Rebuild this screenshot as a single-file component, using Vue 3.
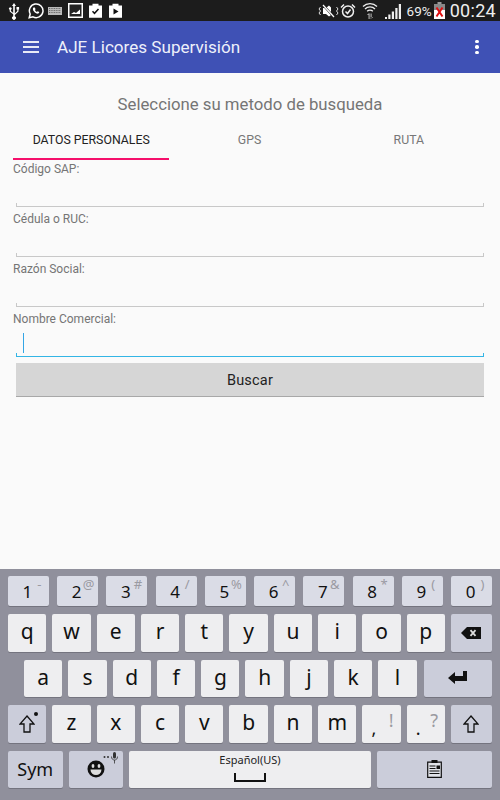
<script setup>
const fields = [
  { label: 'Código SAP:' },
  { label: 'Cédula o RUC:' },
  { label: 'Razón Social:' },
  { label: 'Nombre Comercial:', active: true },
]
const numbers = [['1', '-'], ['2', '@'], ['3', '#'], ['4', '/'], ['5', '%'], ['6', '^'], ['7', '&'], ['8', '*'], ['9', '('], ['0', ')']]
const row2 = ['q', 'w', 'e', 'r', 't', 'y', 'u', 'i', 'o', 'p']
const row3 = ['a', 's', 'd', 'f', 'g', 'h', 'j', 'k', 'l']
const row4 = ['z', 'x', 'c', 'v', 'b', 'n', 'm']
</script>

<template>
  <div class="screen">
    <div class="status">
      <div class="status-left">
        <svg width="12" height="18" viewBox="0 0 12 18"><path d="M6 1 8 4H6.800v7.400L9.300 9V7.600H8.500V5h2.600v2.600h-.6v1.900L6.800 13v1.200a1.900 1.900 0 1 1-1.600 0v-2L1.700 9.500V7.800a1.300 1.300 0 1 1 1.200 0V9l2.300 2V4H4Z" fill="#fff"/></svg>
        <svg class="wa" width="16" height="16" viewBox="0 0 16 16"><path d="M1.200 14.800 2.200 11A6.800 6.800 0 1 1 5 13.800Z" fill="none" stroke="#fff" stroke-width="1.500"/><path d="M5.500 4.600c-1 1-.8 2.500.5 4 1.400 1.600 3 2.500 4.200 2 .8-.3 1.100-1 1-1.500L9.700 8.200l-.8.800C8 8.600 7.400 8 6.900 7l.7-.8-.8-1.700Z" fill="#fff"/></svg>
        <svg class="kb" width="14" height="8" viewBox="0 0 14 8"><path d="M0 0h14v8H0Z" fill="#bbb"/><path d="M1 1.500h12M1 3.500h12M1 5.500h12" stroke="#333" stroke-width=".6" stroke-dasharray="1 .7"/></svg>
        <svg class="img" width="15" height="15" viewBox="0 0 15 15"><path d="M0 0h15v15H0Z" fill="#fff"/><path d="M1.500 1.500h12v12h-12Z" fill="#222"/><path d="M3 11 6 9l2 1 4-3.500V11Z" fill="#fff"/></svg>
        <svg width="15" height="15" viewBox="0 0 15 15"><path d="M1 2.500h3.500V.8h6v1.700H14v12.300H1Z" fill="#fff"/><path d="M4.500 8.300 6.500 10.300 10.500 6" fill="none" stroke="#111" stroke-width="1.500"/></svg>
        <svg width="15" height="15" viewBox="0 0 15 15"><path d="M1 2.500h3.500V.8h6v1.700H14v12.300H1Z" fill="#fff"/><path d="M5.500 5.500 10.500 8.500 5.500 11.500Z" fill="#111"/></svg>
      </div>
      <div class="status-right">
        <svg width="21" height="14" viewBox="0 0 21 14"><path d="M5 4h3l3-2.500 2 2V11L11 12.500 8 10H5Z" fill="#fff"/><path d="M5 1 16 13" stroke="#222" stroke-width="2.200"/><path d="M5 1 16 13" stroke="#fff" stroke-width="1.200"/><path d="M2.500 3 1 5l1.500 2L1 9l1.500 2M18.500 3 20 5l-1.500 2L20 9l-1.500 2" fill="none" stroke="#ddd"/></svg>
        <svg class="alarm" width="16" height="16" viewBox="0 0 16 16"><circle cx="8" cy="8.500" r="5.500" fill="none" stroke="#eee" stroke-width="1.500"/><path d="M5.500 8.500 7.500 10.500 10.500 6.500M1 4.500 4 1.500M15 4.500 12 1.500" fill="none" stroke="#eee" stroke-width="1.500"/></svg>
        <svg class="wifi" width="16" height="17" viewBox="0 0 16 17"><path d="M1 4.500a10 10 0 0 1 14 0M3 7a7 7 0 0 1 10 0M5.200 9.300a3.800 3.800 0 0 1 5.600 0" fill="none" stroke="#eee" stroke-width="1.300"/><path d="M6.500 11.500h1.200V17H6.500ZM4.800 13l2.300-2 .6 2ZM8.500 11.500h1.200V17H8.500ZM8 15l1.100 2 2.100-2Z" fill="#aaa"/></svg>
        <svg class="signal" width="16" height="16" viewBox="0 0 16 16"><path d="M0 14h2v2H0ZM3.300 11.500h2.200V16H3.300ZM6.800 8.500H9V16H6.800ZM10.300 5h2.200v11h-2.200ZM13.800 1H16v15h-2.200Z" fill="#eee"/></svg>
        <span class="pct">69%</span>
        <svg class="battery" width="11" height="17" viewBox="0 0 11 17"><path d="M3.500 0h4v2h-4Z" fill="#999"/><path d="M0 2h11v15H0Z" fill="#888"/><path d="M0 8h11v9H0Z" fill="#fff"/><path d="M2.500 5.500 8.500 14.500M8.500 5.500 2.500 14.500" stroke="#e01010" stroke-width="2"/></svg>
        <span class="time">00:24</span>
      </div>
    </div>

    <header class="appbar">
      <div class="menu"><i></i><i></i><i></i></div>
      <div class="app-title">AJE Licores Supervisión</div>
      <div class="dots"><i></i><i></i><i></i></div>
    </header>

    <main class="content">
      <h1 class="heading">Seleccione su metodo de busqueda</h1>
      <nav class="tabs">
        <div class="tab selected">DATOS PERSONALES</div>
        <div class="tab">GPS</div>
        <div class="tab">RUTA</div>
      </nav>
      <div class="form">
        <div v-for="f in fields" :key="f.label" class="field" :class="{ active: f.active }">
          <label>{{ f.label }}</label>
          <div class="input"><span v-if="f.active" class="caret"></span></div>
        </div>
        <button class="search">Buscar</button>
      </div>
    </main>

    <section class="keyboard">
      <div class="row num">
        <div v-for="k in numbers" :key="k[0]" class="key numkey">
          <span class="main">{{ k[0] }}</span><sup>{{ k[1] }}</sup>
        </div>
      </div>
      <div class="row">
        <div v-for="k in row2" :key="k" class="key light letter">{{ k }}</div>
        <div class="key mod back">
          <svg width="20" height="12" viewBox="0 0 20 12"><path d="M0 6 6 0H20V12H6Z" fill="#111"/><path d="M9.500 3.200 14.500 8.800M14.500 3.200 9.500 8.800" stroke="#ddd" stroke-width="1.800"/></svg>
        </div>
      </div>
      <div class="row third">
        <div v-for="k in row3" :key="k" class="key light letter">{{ k }}</div>
        <div class="key mod enter">
          <svg width="20" height="14" viewBox="0 0 20 14"><path d="M0 8 7 2V6H15V0H19V11H7V14Z" fill="#111" transform="translate(0 -1)"/></svg>
        </div>
      </div>
      <div class="row">
        <div class="key mod shift">
          <svg width="16" height="18" viewBox="0 0 16 18"><path d="M8 1 15 9H11V17H5V9H1Z" fill="none" stroke="#111" stroke-width="1.300"/></svg>
          <span class="lock"></span>
        </div>
        <div v-for="k in row4" :key="k" class="key light letter">{{ k }}</div>
        <div class="key light punct"><span class="p-main">,</span><span class="p-alt">!</span></div>
        <div class="key light punct"><span class="p-main">.</span><span class="p-alt">?</span></div>
        <div class="key mod back shift-r">
          <svg width="16" height="18" viewBox="0 0 16 18"><path d="M8 1 15 9H11V17H5V9H1Z" fill="none" stroke="#111" stroke-width="1.300"/></svg>
        </div>
      </div>
      <div class="row bottom">
        <div class="key mod sym">Sym</div>
        <div class="key mod emoji">
          <svg width="18" height="18" viewBox="0 0 18 18"><circle cx="9" cy="9" r="8.500" fill="#111"/><ellipse cx="6" cy="6" rx="1.400" ry="2" fill="#ddd"/><ellipse cx="12" cy="6" rx="1.400" ry="2" fill="#ddd"/><path d="M3.500 9.500h11A5.500 5.500 0 0 1 3.500 9.500Z" fill="#ddd"/></svg>
          <svg class="mic" width="18" height="12" viewBox="0 0 18 12"><circle cx="1.500" cy="5" r="1" fill="#333"/><circle cx="5" cy="5" r="1" fill="#333"/><rect x="10" y="0" width="3" height="6.500" rx="1.500" fill="#333"/><path d="M8.500 4.500c0 2.300 1.200 3.500 3 3.500s3-1.200 3-3.500M11.500 8v3.500" fill="none" stroke="#333" stroke-width=".8"/></svg>
        </div>
        <div class="key light space">
          <span class="lang">Español(US)</span>
          <span class="bar"></span>
        </div>
        <div class="key mod clip">
          <svg width="15" height="18" viewBox="0 0 15 18"><path d="M.7 2.200h13.600v15.100H.7Z" fill="#e0e2e8" stroke="#111" stroke-width="1.200"/><path d="M4.500 0h6v3h-6Z" fill="#111"/><path d="M2.500 6h6M2.500 8.500h6M2.500 11h10M2.500 13.500h10" stroke="#111" stroke-width="1.200"/><path d="M9.500 5.500h3.500V9H9.500Z" fill="#111"/></svg>
        </div>
      </div>
    </section>
  </div>
</template>

<style scoped>
.screen { width: 500px; height: 800px; display: flex; flex-direction: column; overflow: hidden; background: #fafafa; font-family: Roboto, sans-serif; }
.status { height: 21px; background: #1c1c1c; display: flex; justify-content: space-between; align-items: center; padding: 0 4px 0 8px; }
.status-left { display: flex; align-items: center; gap: 5px; }
.wa { margin-left: 3px; }
.kb { margin-left: -1px; }
.img { margin-left: 1px; }
.status-right { display: flex; align-items: center; color: #eee; }
.alarm { margin-left: 1px; }
.wifi { margin-left: 6px; }
.signal { margin-left: 7px; }
.pct { font: 13.500px Roboto, sans-serif; margin-left: 6px; }
.battery { margin-left: 2px; }
.time { font: 18px Roboto, sans-serif; margin-left: 5px; letter-spacing: .3px; }

.appbar { height: 52px; background: #3f51b5; color: #fff; display: flex; align-items: center; padding: 0 21px 0 23px; box-sizing: border-box; }
.menu { display: flex; flex-direction: column; gap: 3px; width: 16px; }
.menu i { display: block; height: 2px; background: #e8eaf6; }
.app-title { font-size: 17.100px; margin-left: 18px; flex: 1; color: #eef0fa; }
.dots { display: flex; flex-direction: column; gap: 2px; width: 4px; }
.dots i { display: block; width: 3.500px; height: 3.500px; border-radius: 50%; background: #fff; }

.content { flex: 1; padding: 0 13px; min-height: 0; background: #fafafa; }
.heading { margin: 20px 0 0; height: 23px; font-size: 16.750px; line-height: 23px; font-weight: 400; color: #757575; text-align: center; }
.tabs { display: flex; margin-top: 9px; }
.tab { flex: 1; height: 35px; box-sizing: border-box; padding-top: 7px; text-align: center; font-size: 12.300px; line-height: 16px; color: #777; }
.tab.selected { color: #222; border-bottom: 2px solid #f50f6b; margin-right: 2px; }
.tab:nth-child(2) { margin-right: 3px; }

.form { margin-top: 1px; }
.field { height: 50px; }
.field label { display: block; font-size: 12px; line-height: 16px; height: 16px; color: #757575; }
.input { position: relative; margin: 0 3px; height: 30px; box-sizing: border-box; border-bottom: 1px solid #c8c8c8; }
.input::before, .input::after { content: ""; position: absolute; bottom: 0; width: 1px; height: 3px; background: #c8c8c8; }
.input::before { left: 0; }
.input::after { right: 0; }
.field.active .input { border-bottom: 1px solid #33b5e5; }
.field.active .input::before, .field.active .input::after { background: #33b5e5; }
.caret { position: absolute; left: 7px; top: 6px; width: 1px; height: 20px; background: #33a5e5; }
.search { display: block; width: 468px; height: 34px; margin: 2px 3px 0; background: #d6d6d6; border: 0; border-bottom: 1px solid #a8a8a8; padding: 2px 0 0; font: 14.500px Roboto, sans-serif; color: #222; letter-spacing: .2px; }

.keyboard { height: 231px; box-sizing: border-box; background: #90909c; padding: 7px 8px 0 8px; display: flex; flex-direction: column; gap: 8px; font-family: "Noto Sans", sans-serif; color: #111; }
.row { display: flex; gap: 6px; height: 37.500px; }
.row.num { gap: 8.300px; height: 30px; }
.row.third { padding-left: 16px; }
.key { position: relative; display: flex; align-items: center; justify-content: center; border-radius: 2px; box-shadow: 0 1px 0 #74747f; box-sizing: border-box; }
.numkey { width: 41px; background: #dadce6; }
.numkey .main { font-size: 17px; margin-right: 2px; }
.numkey sup { position: absolute; right: 3px; top: 1px; font-size: 13px; line-height: 15px; color: #9a9aa2; width: 13px; text-align: center; }
.light { background: #eeeef0; }
.letter { width: 38.300px; font-size: 21px; padding-bottom: 3px; }
.mod { background: #cbcdda; }
.back { width: 41px; }
.enter { width: 68px; margin-left: auto; }
.shift { width: 38.300px; }
.lock { position: absolute; right: 8px; top: 7px; width: 4px; height: 4px; border-radius: 50%; background: #111; }
.punct { width: 38.300px; }
.p-main { position: absolute; left: 9px; bottom: 6px; font-size: 18px; line-height: 18px; }
.p-alt { position: absolute; right: 7px; top: 4px; font-size: 18px; line-height: 22px; color: #9a9aa0; }
.sym { width: 54.500px; font-size: 18px; }
.emoji { width: 54.500px; }
.mic { position: absolute; right: 2px; top: 1px; }
.space { width: 242px; flex-direction: column; justify-content: flex-start; }
.lang { font-size: 11px; line-height: 14px; margin-top: 2px; color: #222; }
.bar { display: block; box-sizing: border-box; width: 32px; height: 9px; margin-top: 6px; border: 2px solid #111; border-top: 0; }
.clip { width: 115px; }
</style>
